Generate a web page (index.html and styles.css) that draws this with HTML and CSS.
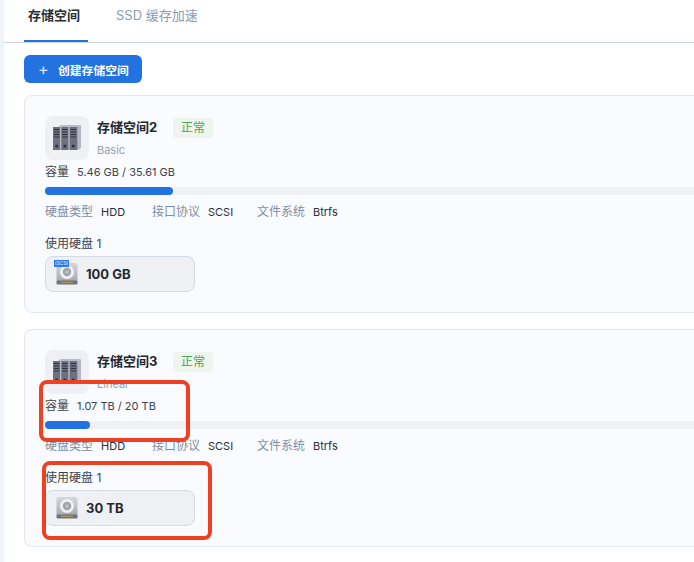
FILE: index.html
```html
<!DOCTYPE html>
<html lang="zh">
<head>
<meta charset="utf-8">
<title>存储空间</title>
<link rel="stylesheet" href="styles.css">
</head>
<body>
<svg class="defs" width="0" height="0" aria-hidden="true">
  <defs>
    <linearGradient id="disk" x1="0" y1="0" x2="0" y2="1">
      <stop offset="0" stop-color="#d6d8dd"/>
      <stop offset="1" stop-color="#a4a7ae"/>
    </linearGradient>
    <symbol id="server" viewBox="0 0 30 28">
      <path d="M6 3l3-2h20l-3 2z" fill="#b9bcc6"/>
      <path d="M26 3l3-2v23l-3 2z" fill="#b4b7c2"/>
      <g fill="#6c7080">
        <rect x="1" y="3" width="7.4" height="23"/>
        <rect x="9.2" y="3" width="7.4" height="23"/>
        <rect x="17.4" y="3" width="8.2" height="23"/>
      </g>
      <g fill="#30333f">
        <rect x="2" y="5" width="5.4" height="1"/><rect x="2" y="7.5" width="5.4" height="1"/><rect x="2" y="10" width="5.4" height="1"/><rect x="2" y="12.5" width="5.4" height="1"/>
        <rect x="10.2" y="5" width="5.4" height="1"/><rect x="10.2" y="7.5" width="5.4" height="1"/><rect x="10.2" y="10" width="5.4" height="1"/><rect x="10.2" y="12.5" width="5.4" height="1"/>
        <rect x="18.6" y="5" width="5.4" height="1"/><rect x="18.6" y="7.5" width="5.4" height="1"/><rect x="18.6" y="10" width="5.4" height="1"/><rect x="18.6" y="12.5" width="5.4" height="1"/>
        <circle cx="4.7" cy="22" r="1.6"/><circle cx="12.9" cy="22" r="1.6"/><circle cx="21.3" cy="22" r="1.6"/>
      </g>
    </symbol>
    <symbol id="hdd" viewBox="0 0 24 24">
      <rect x="1.5" y="1" width="21" height="19" rx="2" fill="url(#disk)"/>
      <rect x="1.5" y="18.5" width="21" height="4" rx="1" fill="#72737a"/>
      <rect x="6" y="19.8" width="12" height="1.2" fill="#a89560"/>
      <circle cx="12" cy="10" r="7" fill="#eef0f3"/>
      <circle cx="12" cy="10" r="4.2" fill="#a0a3ab"/>
      <circle cx="12" cy="10" r="1.8" fill="#bfc1c7"/>
    </symbol>
  </defs>
</svg>
<main class="page">
  <nav class="tabs">
    <a class="tab tab-active">存储空间</a>
    <a class="tab">SSD 缓存加速</a>
  </nav>
  <div class="content">
    <button class="create"><span class="plus">+</span>创建存储空间</button>

    <section class="card">
      <header class="head">
        <div class="thumb"><svg class="server"><use href="#server"/></svg></div>
        <div class="title-block">
          <div class="title-row"><h2 class="name">存储空间2</h2><span class="status">正常</span></div>
          <div class="kind">Basic</div>
        </div>
      </header>
      <div class="capacity"><span class="cap-label">容量</span><span class="cap-value">5.46 GB / 35.61 GB</span></div>
      <div class="track"><div class="fill fill-a"></div></div>
      <dl class="meta">
        <div class="meta-item meta-disk"><dt>硬盘类型</dt><dd>HDD</dd></div>
        <div class="meta-item meta-port"><dt>接口协议</dt><dd>SCSI</dd></div>
        <div class="meta-item"><dt>文件系统</dt><dd>Btrfs</dd></div>
      </dl>
      <div class="used">使用硬盘 1</div>
      <div class="disk">
        <span class="disk-icon">
          <svg class="hdd"><use href="#hdd"/></svg>
          <span class="iscsi">iSCSI</span>
        </span>
        <span class="disk-size">100 GB</span>
      </div>
    </section>

    <section class="card">
      <header class="head">
        <div class="thumb"><svg class="server"><use href="#server"/></svg></div>
        <div class="title-block">
          <div class="title-row"><h2 class="name">存储空间3</h2><span class="status">正常</span></div>
          <div class="kind">Linear</div>
        </div>
      </header>
      <div class="capacity"><span class="cap-label">容量</span><span class="cap-value">1.07 TB / 20 TB</span></div>
      <div class="track"><div class="fill fill-b"></div></div>
      <dl class="meta">
        <div class="meta-item meta-disk"><dt>硬盘类型</dt><dd>HDD</dd></div>
        <div class="meta-item meta-port"><dt>接口协议</dt><dd>SCSI</dd></div>
        <div class="meta-item"><dt>文件系统</dt><dd>Btrfs</dd></div>
      </dl>
      <div class="used">使用硬盘 1</div>
      <div class="disk">
        <span class="disk-icon"><svg class="hdd"><use href="#hdd"/></svg></span>
        <span class="disk-size">30 TB</span>
      </div>
    </section>
  </div>
</main>
<div class="mark mark-capacity"></div>
<div class="mark mark-disk"></div>
</body>
</html>
```

FILE: styles.css
```css
* { box-sizing: border-box; }
html, body { margin: 0; height: 562px; overflow: hidden; }
body {
  position: relative;
  width: 694px;
  background: #fff;
  font-family: Inter, "Noto Sans CJK SC", sans-serif;
  font-size: 12px;
  color: #1f2329;
}
.defs { position: absolute; }
.page {
  margin-left: 4px;
  width: 800px;
  height: 562px;
  background: #fff;
  box-shadow: -4px 0 0 #eff3fa;
}
.tabs {
  display: flex;
  gap: 24px;
  height: 43px;
  padding-left: 20px;
  border-bottom: 1px solid #cbd5e1;
}
.tab {
  height: 42px;
  padding: 0 4px;
  line-height: 30px;
  font-size: 13px;
  color: #8b9bb0;
}
.tab-active {
  width: 64px;
  font-weight: 700;
  color: #2b2f36;
  border-bottom: 2px solid #2272e0;
}
.content { padding: 12px 0 0 20px; }
.create {
  display: flex;
  align-items: center;
  width: 118px;
  height: 28px;
  padding: 0 0 0 14px;
  border: 0;
  border-radius: 6px;
  background: #2272e0;
  color: #fff;
  font: 700 11.8px Inter, "Noto Sans CJK SC", sans-serif;
}
.plus { width: 20px; text-align: left; font-size: 16px; font-weight: 400; line-height: 1; color: #dce9fb; }
.card {
  width: 780px;
  height: 218px;
  margin-top: 12px;
  padding: 20px;
  border: 1px solid #e3e8f0;
  border-radius: 8px;
  background: #fafbfe;
}
.card + .card { margin-top: 16px; }
.head { display: flex; gap: 8px; height: 44px; }
.thumb {
  display: flex;
  align-items: center;
  justify-content: center;
  width: 44px;
  height: 44px;
  border-radius: 8px;
  background: #eff0f4;
}
.server { width: 30px; height: 28px; }
.title-row { display: flex; align-items: center; gap: 12px; height: 20px; margin-top: 2px; }
.name { margin: 0 0 3px; width: 64px; font-size: 13px; font-weight: 700; color: #24272e; }
.status {
  width: 40px;
  height: 20px;
  line-height: 19px;
  text-align: center;
  border-radius: 3px;
  background: #edf5ed;
  color: #4ea458;
  font-size: 12px;
}
.kind { margin-top: 5px; font-size: 11px; line-height: 14px; color: #94a3b8; }
.capacity { display: flex; align-items: center; gap: 8px; height: 16px; margin-top: 4px; line-height: 16px; }
.cap-label { font-size: 12px; color: #3d4450; }
.cap-value { font-size: 11px; color: #3d4450; }
.track { height: 8px; margin-top: 7px; border-radius: 4px; background: #f0f1f5; }
.fill { height: 8px; border-radius: 4px; background: #2272e0; }
.fill-a { width: 128px; }
.fill-b { width: 45px; }
.meta { display: flex; height: 16px; margin: 9px 0 0; line-height: 16px; }
.meta-item { display: flex; gap: 8px; }
.meta-disk { width: 107px; }
.meta-port { width: 105px; }
.meta dt { color: #7f8ea3; font-size: 12px; }
.meta dd { margin: 0; font-size: 11px; color: #2a2e35; }
.used { margin-top: 16px; height: 16px; line-height: 16px; font-size: 12px; color: #3d4450; }
.disk {
  display: flex;
  align-items: center;
  gap: 7px;
  width: 150px;
  height: 36px;
  margin-top: 4px;
  padding-left: 9px;
  border: 1px solid #d3dbe6;
  border-radius: 8px;
  background: #eff0f4;
}
.disk-icon { position: relative; display: block; width: 24px; height: 24px; }
.hdd { display: block; width: 24px; height: 24px; }
.iscsi {
  position: absolute;
  left: -1px;
  top: -2px;
  width: 15px;
  height: 7px;
  background: #2f7be8;
  color: #dbe9ff;
  font: 5px/7px "Liberation Sans", sans-serif;
  text-align: center;
}
.disk-size { font-size: 13px; font-weight: 700; color: #24272e; }
.mark {
  position: absolute;
  border: 4px solid #ef4023;
  border-radius: 8px;
}
.mark-capacity { left: 39px; top: 380px; width: 151px; height: 62px; }
.mark-disk { left: 42px; top: 461px; width: 170px; height: 79px; }
```
